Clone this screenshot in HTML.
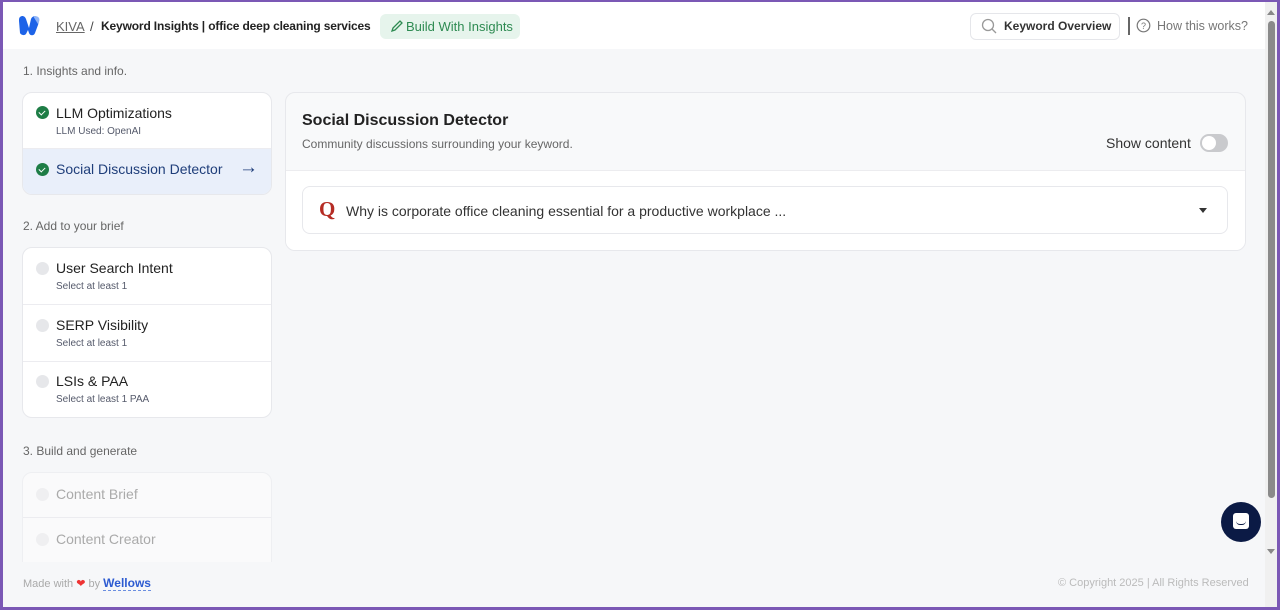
<!DOCTYPE html>
<html><head><meta charset="utf-8"><style>
*{box-sizing:border-box;margin:0;padding:0}
body{width:1280px;height:610px;overflow:hidden;font-family:"Liberation Sans",sans-serif;background:#7b58b5;position:relative}
.frame{position:absolute;left:3px;top:2px;width:1274px;height:605px;background:#f6f7f9;overflow:hidden}
.hdr{position:absolute;left:0;top:0;width:1262px;height:47px;background:#fff}
.a{position:absolute;white-space:nowrap}
.card{position:absolute;background:#fff;border:1px solid #e7e8ec;border-radius:10px;overflow:hidden}
.item{position:absolute;left:0;width:100%;border-bottom:1px solid #ececf0}
.dot{position:absolute;left:13px;width:13px;height:13px;border-radius:50%;background:#e6e7ea}
.chk{position:absolute;left:13px;width:13px;height:13px;border-radius:50%;background:#1e7d46}
.chk:after{content:"";position:absolute;left:4px;top:2.5px;width:3px;height:5px;border:solid #fff;border-width:0 1.5px 1.5px 0;transform:rotate(45deg)}
.t{position:absolute;left:33px;font-size:14px;color:#222}
.s{position:absolute;left:33px;font-size:10px;color:#555a6b}
</style></head><body><div class="frame">
<div class="hdr">
 <svg class="a" style="left:15px;top:12px" width="24" height="22" viewBox="0 0 24 22"><path d="M2 3c2-2 5-1 6 2l3 9 2-9c1-3 5-4 7-1 1 2 1 4 0 7l-3 8c-1 3-5 3-6 0l-1-3-2 4c-2 2-5 1-6-1L1 7C1 5 1 4 2 3z" fill="#1d63e8"/><path d="M15 2c2 0 5 0 6 2 1 2 0 4-1 6z" fill="#8fb4f7"/></svg>
 <span class="a" style="left:53px;top:17px;font-size:13px;color:#666;text-decoration:underline">KIVA</span>
 <span class="a" style="left:87px;top:17px;font-size:13px;color:#444">/</span>
 <span class="a" style="left:98px;top:17px;font-size:12px;letter-spacing:-0.15px;color:#222;font-weight:bold">Keyword Insights | office deep cleaning services</span>
 <div class="a" style="left:377px;top:12px;width:140px;height:25px;background:#e6f4ec;border-radius:6px"></div>
 <svg class="a" style="left:387px;top:17px" width="14" height="14" viewBox="0 0 14 14"><path d="M2 12l1-3 7-7 2 2-7 7z" fill="none" stroke="#2e8b52" stroke-width="1.3"/></svg>
 <span class="a" style="left:403px;top:17px;font-size:13px;color:#2e8b52">Build With Insights</span>
 <div class="a" style="left:967px;top:11px;width:150px;height:27px;border:1px solid #e5e6ea;border-radius:6px"></div>
 <svg class="a" style="left:978px;top:16px" width="16" height="16" viewBox="0 0 16 16"><circle cx="7" cy="7" r="5.5" fill="none" stroke="#999" stroke-width="1.3"/><path d="M11 11l4 4" stroke="#999" stroke-width="1.3"/></svg>
 <span class="a" style="left:1001px;top:17px;font-size:12px;color:#333;font-weight:bold">Keyword Overview</span>
 <div class="a" style="left:1125px;top:15px;width:1.5px;height:18px;background:#666"></div>
 <svg class="a" style="left:1133px;top:16px" width="15" height="15" viewBox="0 0 15 15"><circle cx="7.5" cy="7.5" r="6.3" fill="none" stroke="#777" stroke-width="1.2"/><text x="7.5" y="11" font-size="9" text-anchor="middle" fill="#777" font-family="Liberation Sans">?</text></svg>
 <span class="a" style="left:1154px;top:17px;font-size:12.5px;color:#777">How this works?</span>
</div>
<span class="a" style="left:20px;top:62px;font-size:12px;color:#666">1. Insights and info.</span>
<div class="card" style="left:19px;top:90px;width:250px;height:103px">
 <div class="item" style="top:0;height:56px"><div class="chk" style="top:13px"></div><span class="t" style="top:12px">LLM Optimizations</span><span class="s" style="top:33px">LLM Used: OpenAI</span></div>
 <div class="item" style="top:56px;height:47px;background:#e9effa;border:0"><div class="chk" style="top:14px"></div><span class="t" style="top:12px;color:#1f3e7a">Social Discussion Detector</span><span class="a" style="left:216px;top:8px;font-size:19px;color:#1f3e7a">→</span></div>
</div>
<span class="a" style="left:20px;top:217px;font-size:12px;color:#666">2. Add to your brief</span>
<div class="card" style="left:19px;top:245px;width:250px;height:171px">
 <div class="item" style="top:0;height:57px"><div class="dot" style="top:14px"></div><span class="t" style="top:12px">User Search Intent</span><span class="s" style="top:33px">Select at least 1</span></div>
 <div class="item" style="top:57px;height:57px"><div class="dot" style="top:14px"></div><span class="t" style="top:12px">SERP Visibility</span><span class="s" style="top:33px">Select at least 1</span></div>
 <div class="item" style="top:114px;height:57px;border:0"><div class="dot" style="top:13px"></div><span class="t" style="top:11px">LSIs &amp; PAA</span><span class="s" style="top:32px">Select at least 1 PAA</span></div>
</div>
<span class="a" style="left:20px;top:442px;font-size:12px;color:#666">3. Build and generate</span>
<div class="card" style="left:19px;top:470px;width:250px;height:100px;background:#fafafb;border-color:#eeeff2">
 <div class="item" style="top:0;height:45px"><div class="dot" style="top:15px;background:#efeff1"></div><span class="t" style="top:13px;color:#aaa">Content Brief</span></div>
 <div class="item" style="top:45px;height:55px;border:0"><div class="dot" style="top:15px;background:#efeff1"></div><span class="t" style="top:13px;color:#aaa">Content Creator</span></div>
</div>
<div class="a" style="left:0;top:560px;width:1262px;height:45px;background:#f6f7f9"></div>
<span class="a" style="left:20px;top:574px;font-size:11px;color:#aaa">Made with <span style="color:#e33">❤</span> by <b style="color:#2d5bd1;border-bottom:1px dashed #6b8ee0;font-size:12px">Wellows</b></span>
<span class="a" style="left:1055px;top:575px;font-size:11px;color:#bbb">© Copyright 2025 | All Rights Reserved</span>
<div class="card" style="left:282px;top:90px;width:961px;height:159px;background:#f8f9fa">
 <span class="a" style="left:16px;top:19px;font-size:16px;color:#222;font-weight:bold">Social Discussion Detector</span>
 <span class="a" style="left:16px;top:44px;font-size:12px;color:#666">Community discussions surrounding your keyword.</span>
 <span class="a" style="left:820px;top:42px;font-size:14px;color:#333">Show content</span>
 <div class="a" style="left:914px;top:41px;width:28px;height:18px;border-radius:9px;background:#c9cacd"><div style="position:absolute;left:2px;top:2px;width:14px;height:14px;border-radius:50%;background:#fff"></div></div>
 <div class="a" style="left:0;top:77px;width:100%;height:82px;background:#fff;border-top:1px solid #ececef"></div>
 <div class="a" style="left:16px;top:93px;width:926px;height:48px;background:#fff;border:1px solid #e7e8ec;border-radius:8px">
  <span class="a" style="left:16px;top:10px;font-family:'Liberation Serif',serif;font-weight:bold;font-size:21px;color:#b52c24">Q</span>
  <span class="a" style="left:43px;top:16px;font-size:14px;color:#333">Why is corporate office cleaning essential for a productive workplace ...</span>
  <div class="a" style="left:896px;top:21px;width:0;height:0;border-left:4px solid transparent;border-right:4px solid transparent;border-top:5px solid #333"></div>
 </div>
</div>
<div class="a" style="left:1218px;top:500px;width:40px;height:40px;border-radius:50%;background:#0b1a45"><div style="position:absolute;left:12px;top:11px;width:16px;height:16px;border-radius:3px;background:#fff"></div><div style="position:absolute;left:15px;top:19px;width:10px;height:4px;border-bottom:1.5px solid #0b1a45;border-radius:0 0 5px 5px"></div></div>
<div class="a" style="left:1262px;top:0;width:12px;height:605px;background:#f0f0f0"></div>
<div class="a" style="left:1265px;top:19px;width:7px;height:477px;border-radius:4px;background:#8a8a8a"></div>
<div class="a" style="left:1264px;top:8px;border-left:4px solid transparent;border-right:4px solid transparent;border-bottom:5px solid #888"></div>
<div class="a" style="left:1264px;top:547px;border-left:4px solid transparent;border-right:4px solid transparent;border-top:5px solid #888"></div>
</div></body></html>
